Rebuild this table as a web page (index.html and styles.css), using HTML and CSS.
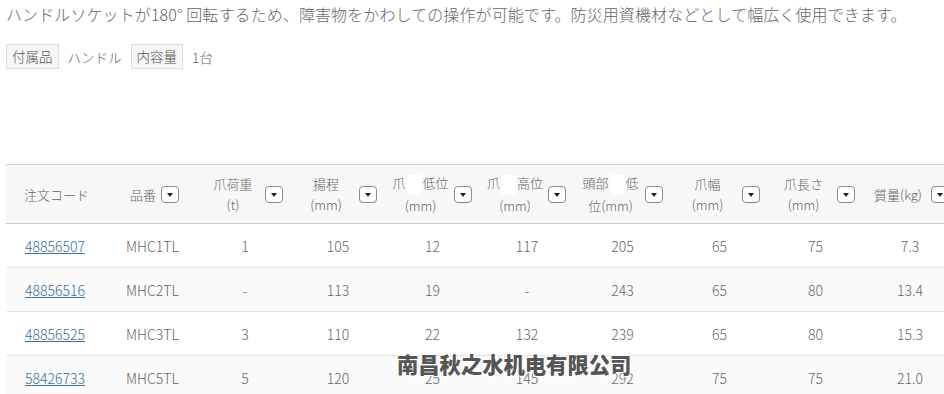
FILE: index.html
```html
<!DOCTYPE html>
<html lang="ja">
<head>
<meta charset="utf-8">
<link rel="stylesheet" href="styles.css">
</head>
<body>
<div class="page">
  <p class="desc">ハンドルソケットが180°&nbsp;回転するため、障害物をかわしての操作が可能です。防災用資機材などとして幅広く使用できます。</p>
  <div class="tags">
    <span class="tag">付属品</span><span class="tagval">ハンドル</span>
    <span class="tag">内容量</span><span class="tagval">1台</span>
  </div>
  <table class="spec">
    <colgroup>
      <col class="w1"><col class="w2"><col class="w3"><col class="w4"><col class="w5">
      <col class="w6"><col class="w7"><col class="w8"><col class="w9"><col class="w10">
    </colgroup>
    <thead>
      <tr>
        <th class="left first"><div class="hc">注文コード</div></th>
        <th class="left second"><div class="hc"><span>品番</span><button class="sort"></button></div></th>
        <th><div class="hc"><span class="ht">爪荷重<br>(t)</span><button class="sort"></button></div></th>
        <th><div class="hc"><span class="ht">揚程<br>(mm)</span><button class="sort"></button></div></th>
        <th><div class="hc"><span class="ht">爪<i class="blank"></i>低位<br>(mm)</span><button class="sort"></button></div></th>
        <th><div class="hc"><span class="ht">爪<i class="blank"></i>高位<br>(mm)</span><button class="sort"></button></div></th>
        <th><div class="hc"><span class="ht">頭部<i class="blank"></i>低<br>位(mm)</span><button class="sort"></button></div></th>
        <th><div class="hc"><span class="ht">爪幅<br>(mm)</span><button class="sort"></button></div></th>
        <th><div class="hc"><span class="ht">爪長さ<br>(mm)</span><button class="sort"></button></div></th>
        <th><div class="hc"><span class="ht">質量(kg)</span><button class="sort"></button></div></th>
      </tr>
    </thead>
    <tbody>
      <tr>
        <td class="left first"><a href="#">48856507</a></td><td class="left second">MHC1TL</td>
        <td>1</td><td>105</td><td>12</td><td>117</td><td>205</td><td>65</td><td>75</td><td>7.3</td>
      </tr>
      <tr class="alt">
        <td class="left first"><a href="#">48856516</a></td><td class="left second">MHC2TL</td>
        <td>-</td><td>113</td><td>19</td><td>-</td><td>243</td><td>65</td><td>80</td><td>13.4</td>
      </tr>
      <tr>
        <td class="left first"><a href="#">48856525</a></td><td class="left second">MHC3TL</td>
        <td>3</td><td>110</td><td>22</td><td>132</td><td>239</td><td>65</td><td>80</td><td>15.3</td>
      </tr>
      <tr class="alt">
        <td class="left first"><a href="#">58426733</a></td><td class="left second">MHC5TL</td>
        <td>5</td><td>120</td><td>25</td><td>145</td><td>292</td><td>75</td><td>75</td><td>21.0</td>
      </tr>
    </tbody>
  </table>
</div>
<div class="watermark">南昌秋之水机电有限公司</div>
</body>
</html>
```
FILE: styles.css
```css
html, body {
  margin: 0;
  padding: 0;
  background: #fff;
  overflow: hidden;
}
body {
  width: 944px;
  height: 394px;
  position: relative;
  font-family: "Noto Sans CJK JP", "Noto Sans", sans-serif;
  color: #666;
  font-weight: 300;
}
.page {
  padding: 0 0 0 6px;
}
.desc {
  margin: 0;
  padding-top: 3px;
  font-size: 16px;
  letter-spacing: 0.1px;
  line-height: 22px;
  color: #666;
  white-space: nowrap;
}
.tags {
  margin-top: 19px;
  display: flex;
  align-items: center;
  height: 25px;
  font-size: 13.5px;
}
.tag {
  box-sizing: border-box;
  height: 25px;
  line-height: 23px;
  padding: 0 5px;
  border: 1px solid #dcdcdc;
  background: #f6f6f6;
  color: #555;
}
.tagval {
  padding: 0 9px;
  color: #666;
}
.spec {
  margin-top: 95px;
  border-collapse: collapse;
  table-layout: fixed;
  width: 951px;
  font-size: 14px;
}
.w1 { width: 104px; }
.w2 { width: 89px; }
.w3 { width: 92px; }
.w4 { width: 94px; }
.w5 { width: 95px; }
.w6 { width: 94px; }
.w7 { width: 97px; }
.w8 { width: 97px; }
.w9 { width: 95px; }
.w10 { width: 94px; }
.spec thead tr {
  background: #f7f7f7;
  border-top: 1px solid #d6d6d6;
  border-bottom: 1px solid #c8c8c8;
}
.spec th {
  height: 58px;
  padding: 0 8px 0 2px;
  font-weight: 300;
  font-size: 13px;
  line-height: 21px;
  color: #666;
}
.hc {
  display: flex;
  align-items: center;
}
.ht {
  flex: 1;
  text-align: center;
}
th.first { padding-left: 18px; }
th.second { padding-left: 20px; }
th.second .hc span { margin-right: 5px; }
.blank {
  display: inline-block;
  width: 15px;
  height: 20px;
  background: #fff;
  vertical-align: middle;
  margin: 0 1px;
}
.sort {
  flex: none;
  width: 18px;
  height: 17px;
  padding: 0;
  border: 1px solid #8a8a8a;
  border-radius: 4px;
  background: #fff;
  position: relative;
}
.sort::after {
  content: "";
  position: absolute;
  left: 5px;
  top: 6px;
  border-left: 3.5px solid transparent;
  border-right: 3.5px solid transparent;
  border-top: 4px solid #222;
}
.spec td {
  height: 43px;
  padding: 0;
  text-align: center;
  border-bottom: 1px solid #e6e6e6;
  color: #666;
}
.spec tr.alt td { background: #fafafa; }
td.first { padding-left: 19px; text-align: left; }
td.second { padding-left: 16px; text-align: left; }
.spec a {
  color: #3b6f98;
  text-decoration: underline;
}
.watermark {
  position: absolute;
  left: 397px;
  top: 352px;
  font-family: "Noto Sans CJK SC", sans-serif;
  font-weight: 900;
  font-size: 21.3px;
  line-height: 23px;
  color: #555;
  white-space: nowrap;
  text-shadow: 1px 0 0 #fff, -1px 0 0 #fff, 0 1px 0 #fff, 0 -1px 0 #fff;
}
```
